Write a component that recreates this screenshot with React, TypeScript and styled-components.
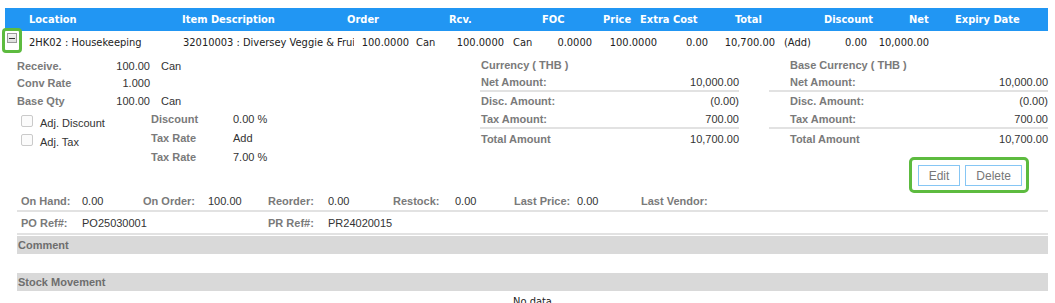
import React from "react";
import styled, { createGlobalStyle } from "styled-components";

const Global = createGlobalStyle`
  html, body { margin: 0; padding: 0; background: #fff; }
  body {
    font-family: "Liberation Sans", Arial, sans-serif;
    font-size: 11px;
    color: #333;
  }
  * { box-sizing: border-box; }
`;

const GREEN = "#5dbb3f";
const LINE = "#e2e2e2";

const Page = styled.div`
  width: 1055px;
  height: 303px;
  overflow: hidden;
  padding-top: 8px;
`;

const HeaderBar = styled.div`
  margin-left: 5px;
  width: 1043px;
  height: 23px;
  background: #2196f3;
  color: #fff;
  display: grid;
  grid-template-columns: 24px 153px 165px 102px 93px 61px 37px 95px 89px 85px 46px 1fr;
  align-items: center;
  font-family: "DejaVu Sans Condensed", "DejaVu Sans", sans-serif;
  font-weight: bold;
  font-size: 11px;
  white-space: nowrap;
`;

const DataRow = styled.div`
  margin-left: 5px;
  width: 1043px;
  height: 22px;
  display: grid;
  grid-template-columns: 19px 154px 176px 55px 36px 59px 36px 52px 65px 51px 67px 40px 52px 62px 1fr;
  align-items: center;
  font-family: "DejaVu Sans Condensed", "DejaVu Sans", sans-serif;
  font-size: 11px;
  color: #222;
  white-space: nowrap;
`;

const Cell = styled.div<{ $right?: boolean; $pl?: number }>`
  text-align: ${(p) => (p.$right ? "right" : "left")};
  padding-left: ${(p) => p.$pl ?? 0}px;
  overflow: hidden;
`;

const ExpandCell = styled.div`
  overflow: visible;
  align-self: start;
`;

const ExpandBox = styled.div`
  position: relative;
  z-index: 1;
  margin-left: -3px;
  margin-top: -3px;
  width: 20px;
  height: 25px;
  border: 3px solid ${GREEN};
  border-radius: 4px;
  padding: 1px 0 0 2px;
  background: #fff;
`;

const MinusIcon = styled.div`
  width: 10px;
  height: 10px;
  margin-top: 1px;
  border: 1px solid #9a9a9a;
  background: linear-gradient(#f4f4f4, #dcdcdc);
  display: flex;
  align-items: center;
  justify-content: center;
  &::after {
    content: "";
    width: 6px;
    height: 1px;
    background: #333;
  }
`;

const Details = styled.div`
  display: flex;
  align-items: flex-start;
  padding: 4px 7px 0 17px;
  width: 1055px;
`;

const LeftCol = styled.div`
  width: 463px;
  display: flex;
  flex-direction: column;
`;

const InfoRow = styled.div`
  display: grid;
  grid-template-columns: 93px 40px auto;
  height: 17.5px;
  align-items: center;
`;

const Label = styled.span`
  font-weight: bold;
  color: #7a7a7a;
  white-space: nowrap;
`;

const Value = styled.span<{ $right?: boolean; $pl?: number }>`
  color: #333;
  text-align: ${(p) => (p.$right ? "right" : "left")};
  padding-left: ${(p) => p.$pl ?? 0}px;
  white-space: nowrap;
`;

const LowerBlock = styled.div`
  display: flex;
`;

const CheckCol = styled.div`
  margin-left: 4px;
  width: 130px;
  padding-top: 4px;
`;

const CheckRow = styled.label`
  display: flex;
  align-items: flex-start;
  height: 19px;
  line-height: 19px;
  color: #333;
`;

const Check = styled.span`
  width: 12px;
  height: 12px;
  margin-top: 1px;
  border: 1px solid #cacaca;
  border-radius: 2px;
  background: #fbfbfb;
  flex: none;
`;

const CheckText = styled.span`
  margin-left: 7px;
`;

const TaxGrid = styled.div`
  display: grid;
  grid-template-columns: 82px auto;
  grid-auto-rows: 19px;
  align-items: center;
`;

const AmountCol = styled.div<{ $width: number; $ml: number; $pl: number }>`
  width: ${(p) => p.$width}px;
  margin-left: ${(p) => p.$ml}px;
  display: flex;
  flex-direction: column;
  --label-pl: ${(p) => p.$pl}px;
`;

const AmountTitle = styled.div`
  height: 17.5px;
  line-height: 17.5px;
  padding-left: var(--label-pl);
  font-weight: bold;
  color: #7a7a7a;
`;

const AmountRow = styled.div<{ $h: number; $line?: boolean }>`
  height: ${(p) => p.$h}px;
  display: flex;
  align-items: center;
  justify-content: space-between;
  padding-left: var(--label-pl);
  border-bottom: ${(p) => (p.$line ? `2px solid ${LINE}` : "none")};
`;

const ButtonBar = styled.div`
  align-self: flex-end;
  margin: 8px 19px -2px 0;
  display: flex;
  gap: 5px;
  padding: 5px 4px 4px 6px;
  border: 3px solid ${GREEN};
  border-radius: 5px;
`;

const Button = styled.button`
  height: 21px;
  padding: 0 10px;
  border: 1px solid #86c6f4;
  background: #fff;
  color: #777;
  font-family: "Liberation Sans", Arial, sans-serif;
  font-size: 12px;
  cursor: pointer;
`;

const Bottom = styled.div`
  margin-left: 17px;
  width: 1031px;
`;

const StatRow = styled.div<{ $h: number }>`
  height: ${(p) => p.$h}px;
  display: grid;
  grid-template-columns: 61px 61px 65px 60px 60px 65px 62px 59px 63px 64px 1fr;
  align-items: center;
  padding-left: 4px;
  border-bottom: 2px solid ${LINE};
`;

const Band = styled.div<{ $mt: number }>`
  margin-top: ${(p) => p.$mt}px;
  height: 18px;
  line-height: 18px;
  background: #d9d9d9;
  font-weight: bold;
  color: #6e6e6e;
  padding-left: 1px;
`;

const NoData = styled.div`
  padding-top: 3px;
  text-align: center;
  font-family: "DejaVu Sans Condensed", "DejaVu Sans", sans-serif;
  font-size: 11px;
  color: #222;
  line-height: 16px;
`;

const headers = [
  "",
  "Location",
  "Item Description",
  "Order",
  "Rcv.",
  "FOC",
  "Price",
  "Extra Cost",
  "Total",
  "Discount",
  "Net",
  "Expiry Date",
];

type Amounts = { title: string; net: string; disc: string; tax: string; total: string };

const AmountBlock: React.FC<{ a: Amounts }> = ({ a }) => (
  <>
    <AmountTitle>{a.title}</AmountTitle>
    <AmountRow $h={17.5} $line>
      <Label>Net Amount:</Label>
      <Value>{a.net}</Value>
    </AmountRow>
    <AmountRow $h={18}>
      <Label>Disc. Amount:</Label>
      <Value>{a.disc}</Value>
    </AmountRow>
    <AmountRow $h={19} $line>
      <Label>Tax Amount:</Label>
      <Value>{a.tax}</Value>
    </AmountRow>
    <AmountRow $h={20}>
      <Label>Total Amount</Label>
      <Value>{a.total}</Value>
    </AmountRow>
  </>
);

export default function App() {
  return (
    <Page>
      <Global />
      <HeaderBar>
        {headers.map((h, i) => (
          <span key={i}>{h}</span>
        ))}
      </HeaderBar>
      <DataRow>
        <ExpandCell>
          <ExpandBox>
            <MinusIcon />
          </ExpandBox>
        </ExpandCell>
        <Cell $pl={5}>2HK02 : Housekeeping</Cell>
        <Cell $pl={5}>32010003 : Diversey Veggie &amp; Frui</Cell>
        <Cell $right>100.0000</Cell>
        <Cell $pl={7}>Can</Cell>
        <Cell $right>100.0000</Cell>
        <Cell $pl={9}>Can</Cell>
        <Cell $right>0.0000</Cell>
        <Cell $right>100.0000</Cell>
        <Cell $right>0.00</Cell>
        <Cell $right>10,700.00</Cell>
        <Cell $pl={9}>(Add)</Cell>
        <Cell $right>0.00</Cell>
        <Cell $right>10,000.00</Cell>
        <Cell />
      </DataRow>

      <Details>
        <LeftCol>
          <InfoRow>
            <Label>Receive.</Label>
            <Value $right>100.00</Value>
            <Value $pl={11}>Can</Value>
          </InfoRow>
          <InfoRow>
            <Label>Conv Rate</Label>
            <Value $right>1.000</Value>
            <Value />
          </InfoRow>
          <InfoRow>
            <Label>Base Qty</Label>
            <Value $right>100.00</Value>
            <Value $pl={11}>Can</Value>
          </InfoRow>
          <LowerBlock>
            <CheckCol>
              <CheckRow>
                <Check />
                <CheckText>Adj. Discount</CheckText>
              </CheckRow>
              <CheckRow>
                <Check />
                <CheckText>Adj. Tax</CheckText>
              </CheckRow>
            </CheckCol>
            <TaxGrid>
              <Label>Discount</Label>
              <Value>0.00 %</Value>
              <Label>Tax Rate</Label>
              <Value>Add</Value>
              <Label>Tax Rate</Label>
              <Value>7.00 %</Value>
            </TaxGrid>
          </LowerBlock>
        </LeftCol>

        <AmountCol $width={259} $ml={0} $pl={1}>
          <AmountBlock
            a={{ title: "Currency ( THB )", net: "10,000.00", disc: "(0.00)", tax: "700.00", total: "10,700.00" }}
          />
        </AmountCol>

        <AmountCol $width={279} $ml={30} $pl={21}>
          <AmountBlock
            a={{ title: "Base Currency ( THB )", net: "10,000.00", disc: "(0.00)", tax: "700.00", total: "10,700.00" }}
          />
          <ButtonBar>
            <Button>Edit</Button>
            <Button>Delete</Button>
          </ButtonBar>
        </AmountCol>
      </Details>

      <Bottom>
        <StatRow $h={21}>
          <Label>On Hand:</Label>
          <Value>0.00</Value>
          <Label>On Order:</Label>
          <Value>100.00</Value>
          <Label>Reorder:</Label>
          <Value>0.00</Value>
          <Label>Restock:</Label>
          <Value>0.00</Value>
          <Label>Last Price:</Label>
          <Value>0.00</Value>
          <Label>Last Vendor:</Label>
        </StatRow>
        <StatRow $h={23}>
          <Label>PO Ref#:</Label>
          <Value>PO25030001</Value>
          <span />
          <span />
          <Label>PR Ref#:</Label>
          <Value>PR24020015</Value>
        </StatRow>
        <Band $mt={1}>Comment</Band>
        <Band $mt={19}>Stock Movement</Band>
        <NoData>No data</NoData>
      </Bottom>
    </Page>
  );
}
